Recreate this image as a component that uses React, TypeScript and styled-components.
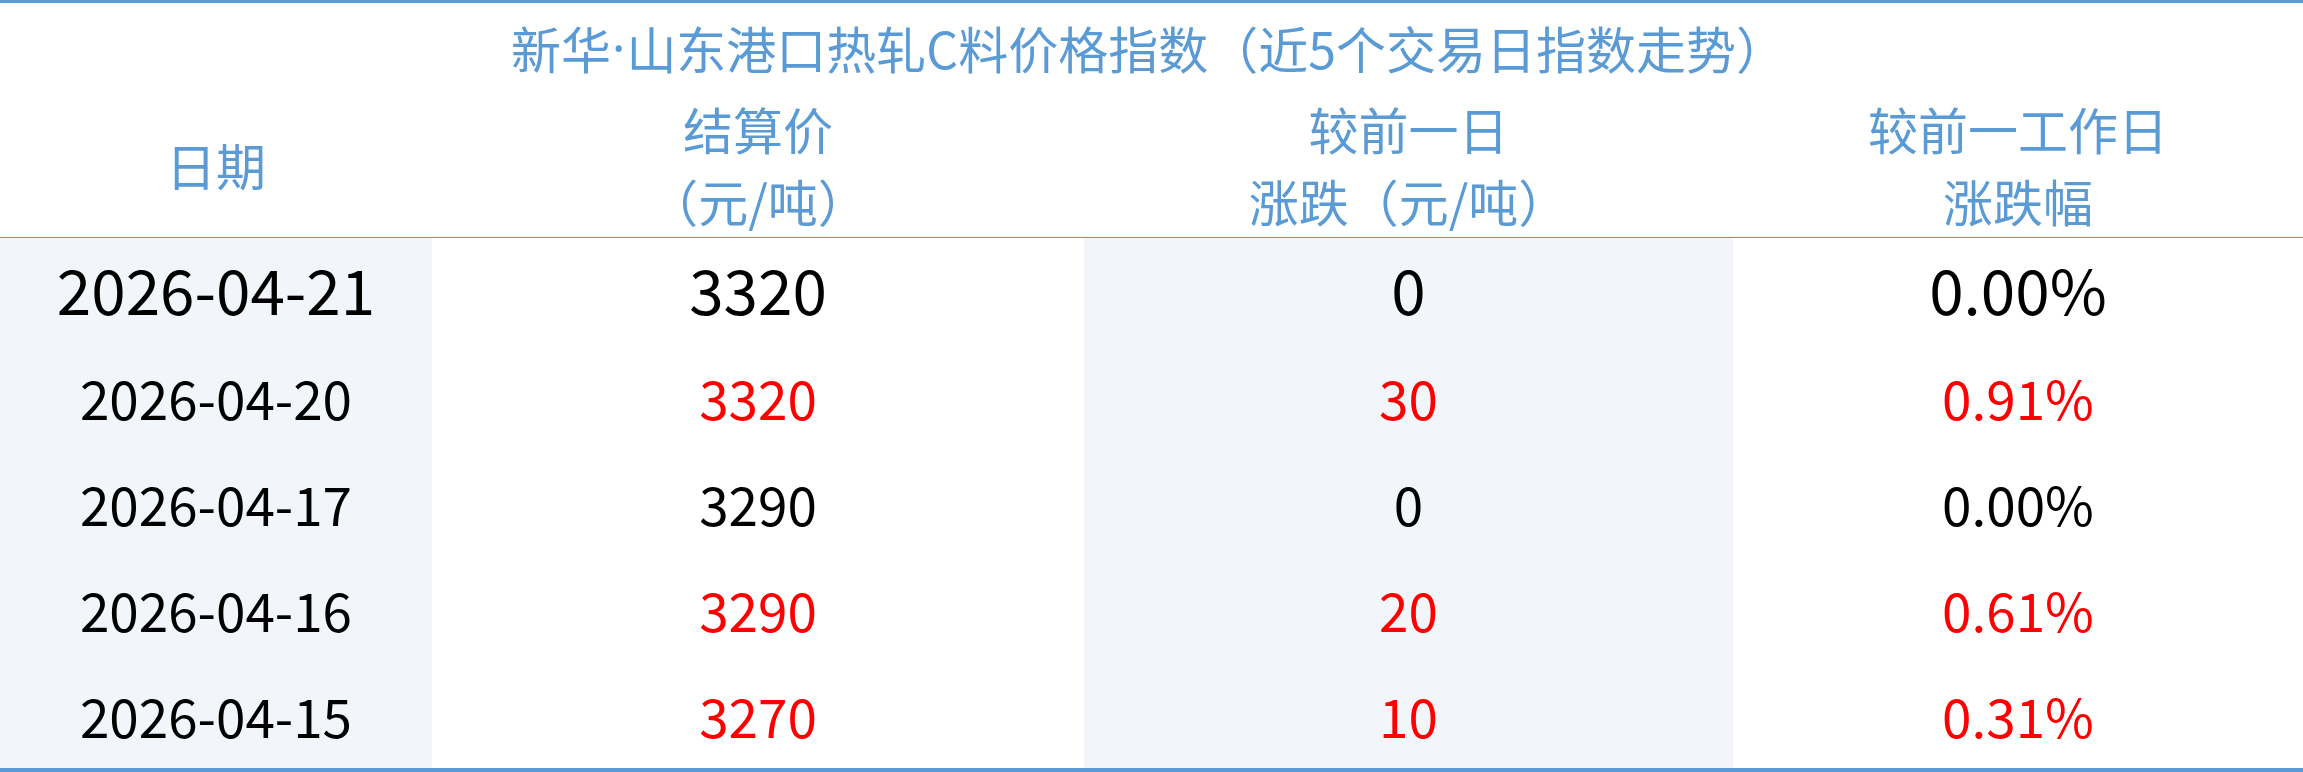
import styled, { createGlobalStyle } from "styled-components";

const GlobalStyle = createGlobalStyle`
  html, body {
    margin: 0;
    padding: 0;
    background: #ffffff;
  }
  body {
    font-family: "Noto Sans CJK SC", "Noto Sans", sans-serif;
  }
`;

interface Row {
  date: string;
  price: string;
  change: string;
  pct: string;
}

const rows: Row[] = [
  { date: "2026-04-21", price: "3320", change: "0", pct: "0.00%" },
  { date: "2026-04-20", price: "3320", change: "30", pct: "0.91%" },
  { date: "2026-04-17", price: "3290", change: "0", pct: "0.00%" },
  { date: "2026-04-16", price: "3290", change: "20", pct: "0.61%" },
  { date: "2026-04-15", price: "3270", change: "10", pct: "0.31%" },
];

const BLUE = "#5b9bd5";
const COLUMNS = "432px 652px 649px 1fr";

export default function App() {
  return (
    <>
      <GlobalStyle />
      <Board>
        <Title>
          新华<Dot>·</Dot>山东港口热轧C料价格指数（近5个交易日指数走势）
        </Title>
        <HeaderRow>
          <HeadCell>日期</HeadCell>
          <HeadCell>
            结算价
            <br />
            （元/吨）
          </HeadCell>
          <HeadCell>
            较前一日
            <br />
            涨跌（元/吨）
          </HeadCell>
          <HeadCell>
            较前一工作日
            <br />
            涨跌幅
          </HeadCell>
        </HeaderRow>
        {rows.map((row, i) => {
          const up = row.change !== "0";
          const latest = i === 0;
          return (
            <DataRow key={row.date}>
              <Cell $shaded $latest={latest}>
                {row.date}
              </Cell>
              <Cell $latest={latest} $up={up}>
                {row.price}
              </Cell>
              <Cell $shaded $latest={latest} $up={up}>
                {row.change}
              </Cell>
              <Cell $latest={latest} $up={up}>
                {row.pct}
              </Cell>
            </DataRow>
          );
        })}
      </Board>
    </>
  );
}

const Board = styled.div`
  box-sizing: border-box;
  width: 2303px;
  height: 772px;
  border-top: 3px solid ${BLUE};
  border-bottom: 4px solid ${BLUE};
  display: flex;
  flex-direction: column;
  background: #ffffff;
`;

const Title = styled.div`
  height: 88px;
  display: flex;
  align-items: center;
  justify-content: center;
  padding-right: 6px;

  color: ${BLUE};
  font-size: 50px;
  white-space: nowrap;
`;

const Dot = styled.span`
  font-family: "Noto Sans", sans-serif;
  margin: 0 1px;
`;

const HeaderRow = styled.div`
  height: 146px;
  display: grid;
  grid-template-columns: ${COLUMNS};
  border-bottom: 1px solid ${BLUE};
`;

const HeadCell = styled.div`
  display: flex;
  align-items: center;
  justify-content: center;
  text-align: center;

  color: ${BLUE};
  font-size: 50px;
  line-height: 72px;
`;

const DataRow = styled.div`
  height: 106px;
  display: grid;
  grid-template-columns: ${COLUMNS};
`;

const Cell = styled.div<{ $shaded?: boolean; $latest?: boolean; $up?: boolean }>`
  display: flex;
  align-items: center;
  justify-content: center;
  padding-bottom: ${(p) => (p.$latest ? "6px" : "0")};

  background: ${(p) => (p.$shaded ? "#f2f6fb" : "#ffffff")};
  color: ${(p) => (p.$up ? "#ff0000" : "#000000")};
  font-size: ${(p) => (p.$latest ? "62px" : "53px")};
`;
